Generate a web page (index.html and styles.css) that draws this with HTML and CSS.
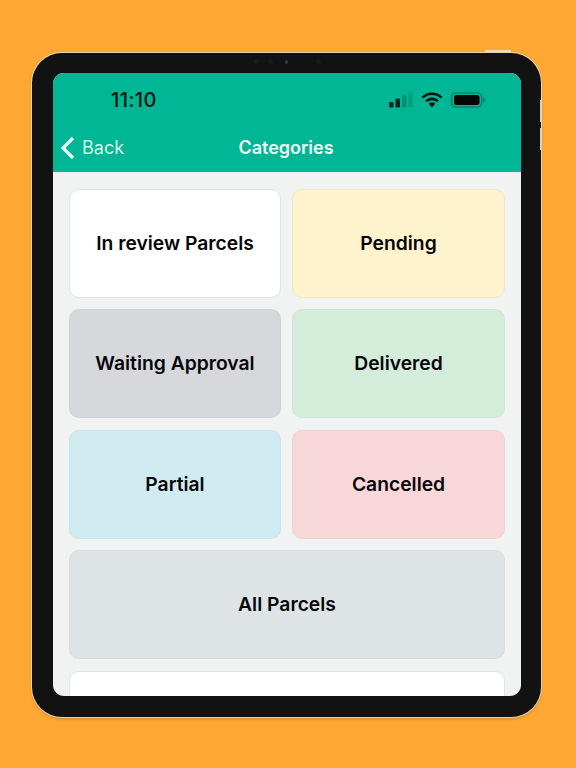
FILE: index.html
```html
<!DOCTYPE html>
<html lang="en">
<head>
<meta charset="utf-8">
<title>Categories</title>
<link rel="stylesheet" href="styles.css">
</head>
<body>
<div class="device">
  <span class="btn-top"></span>
  <span class="btn-side btn-up"></span>
  <span class="btn-side btn-down"></span>
  <div class="camera"><i></i><i class="second"></i><i class="lens"></i><i class="last"></i></div>
  <div class="screen">
    <header class="header">
      <div class="status">
        <span class="time">11:10</span>
        <div class="status-icons">
          <svg class="signal" width="24" height="16" viewBox="0 0 24 16">
            <rect x="0" y="10" width="4.500" height="5.500" rx="1" fill="#06231c"/>
            <rect x="6.500" y="6.500" width="4.500" height="9" rx="1" fill="#06231c"/>
            <rect x="13" y="3" width="4.500" height="12.500" rx="1" fill="#06231c" opacity=".25"/>
            <rect x="19.500" y="0" width="4" height="15.500" rx="1" fill="#06231c" opacity=".15"/>
          </svg>
          <svg class="wifi" width="22" height="16" viewBox="0 0 22 16">
            <path d="M1.500 5.600a13.600 13.600 0 0 1 19 0" fill="none" stroke="#06140f" stroke-width="2.600"/>
            <path d="M5.200 9.200a8.300 8.300 0 0 1 11.600 0" fill="none" stroke="#06140f" stroke-width="2.600"/>
            <path d="M7.800 11.700a4.500 4.500 0 0 1 6.400 0L11 15.500z" fill="#06140f"/>
          </svg>
          <svg class="battery" width="34" height="16" viewBox="0 0 34 16">
            <rect x=".700" y="1" width="30" height="14" rx="4" fill="none" stroke="#06231c" stroke-opacity=".45" stroke-width="1.200"/>
            <rect x="3" y="3" width="25.500" height="10" rx="2.500" fill="#050505"/>
            <path d="M32.200 5.800c1 .3 1.500 1.200 1.500 2.200s-.5 1.900-1.500 2.200z" fill="#06231c" fill-opacity=".5"/>
          </svg>
        </div>
      </div>
      <nav class="nav">
        <a class="back">
          <svg width="16" height="24" viewBox="0 0 16 24"><path d="M13 2 3 12l10 10" fill="none" stroke="#e9fbf5" stroke-width="3.200"/></svg>
          <span>Back</span>
        </a>
        <h1 class="title">Categories</h1>
      </nav>
    </header>
    <main class="grid">
      <div class="card white">In review Parcels</div>
      <div class="card yellow">Pending</div>
      <div class="card gray">Waiting Approval</div>
      <div class="card green">Delivered</div>
      <div class="card blue">Partial</div>
      <div class="card red">Cancelled</div>
      <div class="card slate wide">All Parcels</div>
      <div class="card white wide"></div>
    </main>
  </div>
</div>
</body>
</html>
```
FILE: styles.css
```css
* { box-sizing: border-box; }
html, body { margin: 0; height: 100%; }
body {
  background: #ffa733;
  padding: 53px 0 0 32px;
  overflow: hidden;
  font-family: Inter, "Liberation Sans", sans-serif;
}
.device {
  position: relative;
  width: 509px;
  height: 664px;
  padding: 20px 20px 20px 21px;
  background: #121212;
  border-radius: 30px;
  box-shadow: 0 0 0 1px #e6d3b0, 0 2px 3px rgba(120, 80, 20, .35);
}
.btn-top {
  position: absolute;
  top: -3px;
  left: 453px;
  width: 26px;
  height: 2px;
  background: #e8dcc6;
}
.btn-side {
  position: absolute;
  left: 508px;
  width: 2px;
  height: 22px;
  background: #d6d2c6;
}
.btn-up { top: 47px; }
.btn-down { top: 75px; }
.camera {
  position: absolute;
  top: 6px;
  left: 222px;
  display: flex;
  align-items: center;
}
.camera i { width: 5px; height: 5px; border-radius: 50%; background: #1b1b1d; }
.camera .second { margin-left: 9px; }
.camera .lens { width: 3px; height: 4px; background: #1f3f5c; margin-left: 12px; }
.camera .last { margin-left: 28px; }
.screen {
  width: 468px;
  height: 623px;
  border-radius: 11px;
  overflow: hidden;
  background: #f1f2f2;
}
.header {
  height: 98.500px;
  background: #00b694;
}
.status {
  height: 54px;
  padding: 17px 36px 0 58px;
  display: flex;
  justify-content: space-between;
  align-items: flex-start;
}
.time {
  font-size: 20px;
  line-height: 20px;
  font-weight: 500;
  letter-spacing: .4px;
  color: #06140f;
}
.status-icons {
  display: flex;
  align-items: center;
  gap: 8px;
  height: 20px;
}
.nav {
  position: relative;
  height: 44.500px;
  display: flex;
  align-items: flex-start;
  justify-content: center;
}
.back {
  position: absolute;
  left: 7px;
  top: 8px;
  display: flex;
  align-items: center;
  gap: 6px;
  font-size: 18px;
  line-height: 26px;
  color: #d6f5eb;
}
.title {
  margin: 9px 2px 0 0;
  font-size: 18px;
  line-height: 24px;
  font-weight: 600;
  color: #eefcf8;
}
.grid {
  display: grid;
  grid-template-columns: 212px 213px;
  grid-auto-rows: 109px;
  gap: 11.500px 11px;
  padding: 17px 0 0 16px;
}
.card {
  display: flex;
  align-items: center;
  justify-content: center;
  padding-bottom: 1px;
  border: 1px solid rgba(0, 0, 0, .03);
  border-radius: 10px;
  font-size: 19.300px;
  font-weight: 600;
  color: #060608;
}
.wide { grid-column: 1 / -1; }
.white { background: #fff; border-color: #e3e3e3; }
.yellow { background: #fff3cd; border-color: #f1e6c6; }
.gray { background: #d6d8db; }
.green { background: #d4edda; }
.blue { background: #d1ecf1; }
.red { background: #f8d7da; }
.slate { background: #dee4e6; }
```
